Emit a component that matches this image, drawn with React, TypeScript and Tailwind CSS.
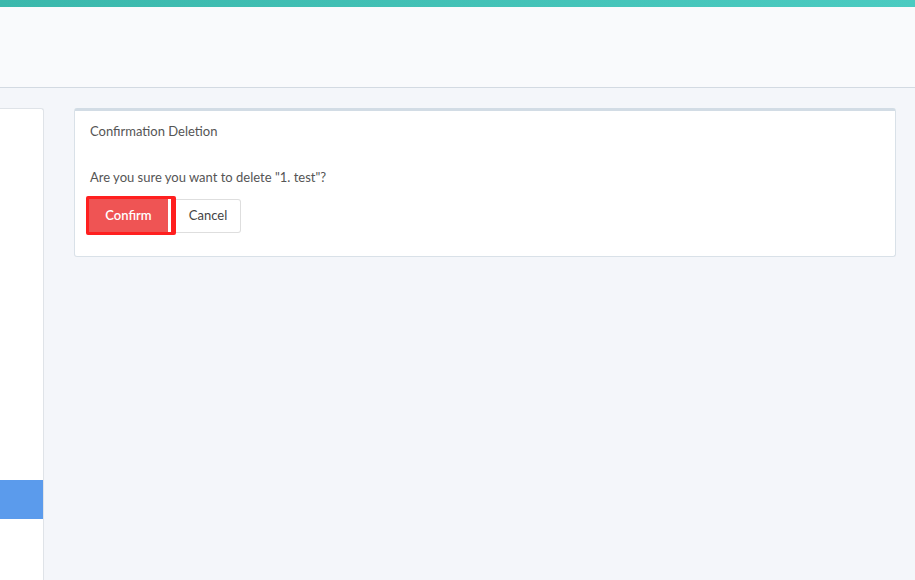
export default function App() {
  return (
    <div className="flex h-[580px] w-[915px] flex-col overflow-hidden bg-[#f4f6fa] font-['Lato',sans-serif]">
      <div className="h-[7px] shrink-0 bg-gradient-to-r from-[#3bb8ac] to-[#4bcbc1]" />
      <header className="h-[81px] shrink-0 border-b border-[#d3dae2] bg-[#f9fafc]" />

      <div className="flex flex-1 gap-[30px] pt-[20px]">
        <aside className="flex w-[44px] shrink-0 flex-col rounded-tr-[3px] border-t border-r border-[#dfe3e8] bg-white">
          <div className="h-[371px]" />
          <div className="h-[39px] bg-[#5b9bec]" />
        </aside>

        <main className="flex-1 pr-[19px]">
          <section className="h-[149px] rounded-[3px] border border-t-[3px] border-[#d9e1e8] border-t-[#d2dce5] bg-white px-[15px]">
            <h2 className="pt-[11px] text-[13px] leading-[18px] text-[#555]">Confirmation Deletion</h2>
            <p className="mt-[28px] text-[13px] leading-[18px] text-[#555]">Are you sure you want to delete "1. test"?</p>
            <div className="mt-[10px] -ml-[4px] flex items-center">
              <div className="relative z-10 flex rounded-[2px] border-[3px] border-r-[5px] border-[#ff1f1f] bg-white">
                <button type="button" className="h-[33px] w-[79px] bg-[#ef5454] text-[13px] font-semibold text-white">
                  Confirm
                </button>
                <div className="w-[3px]" />
              </div>
              <button
                type="button"
                className="h-[34px] w-[65px] rounded-r-[3px] border border-l-0 border-[#dedede] bg-white text-[13px] text-[#444]"
              >
                Cancel
              </button>
            </div>
          </section>
        </main>
      </div>
    </div>
  );
}
